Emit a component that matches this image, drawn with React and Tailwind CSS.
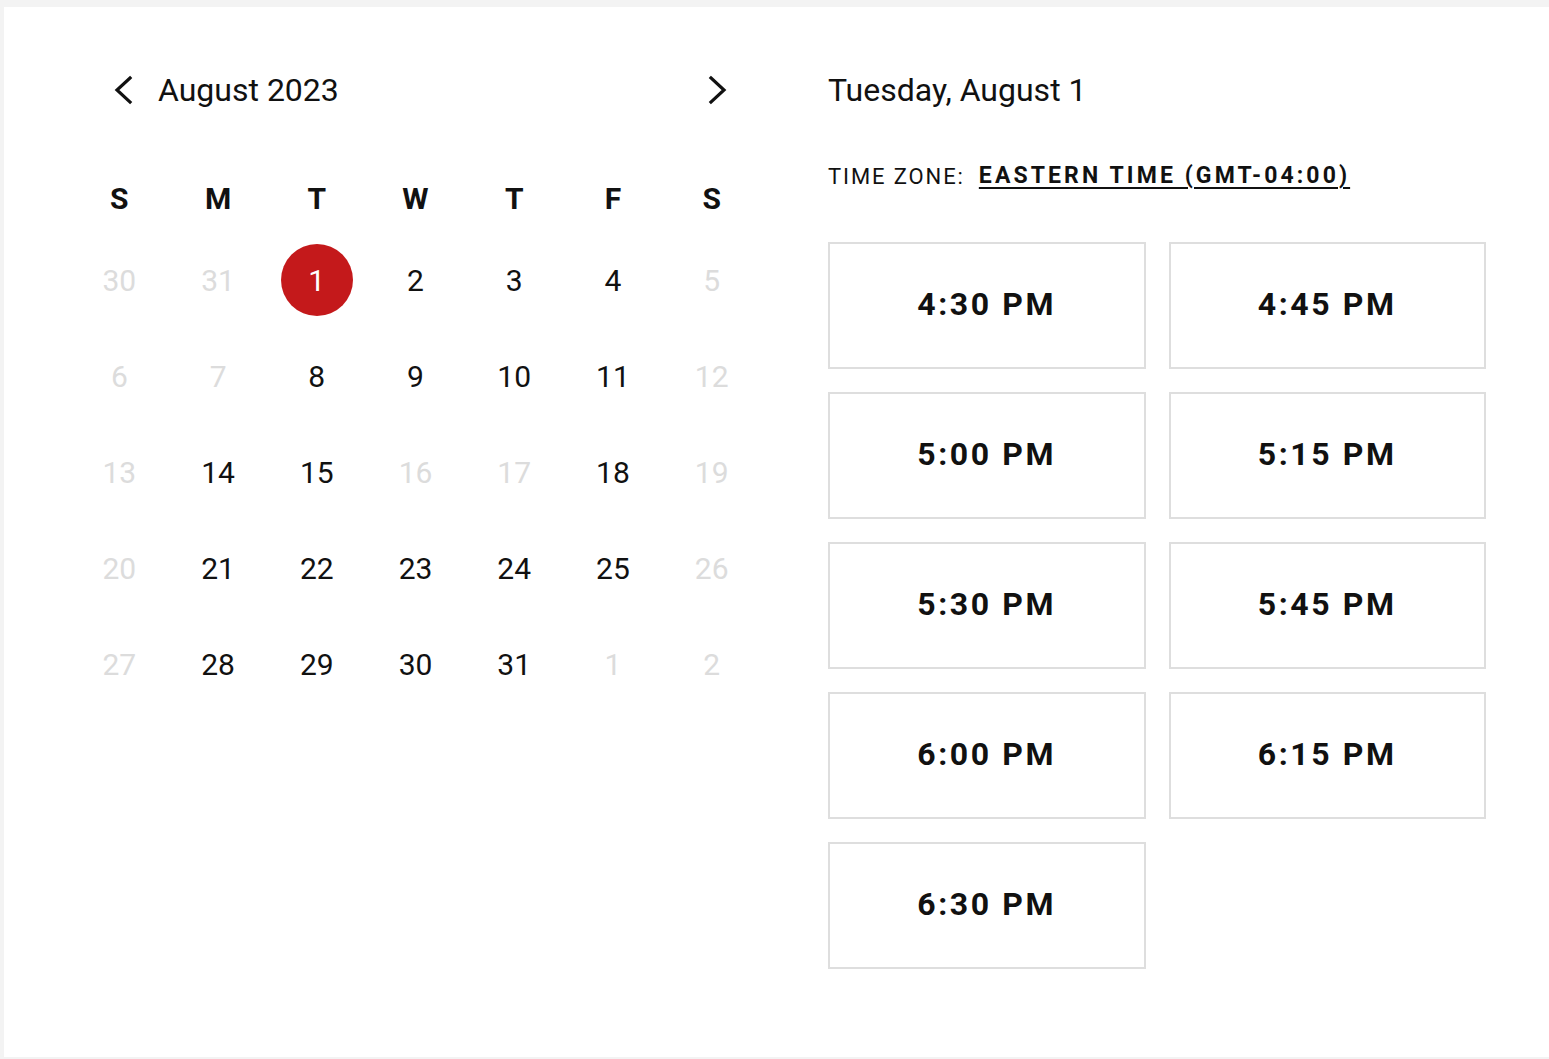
import React from "react";

const days = ["S", "M", "T", "W", "T", "F", "S"];

// [label, muted]
const weeks = [
  [["30", 1], ["31", 1], ["1", 0], ["2", 0], ["3", 0], ["4", 0], ["5", 1]],
  [["6", 1], ["7", 1], ["8", 0], ["9", 0], ["10", 0], ["11", 0], ["12", 1]],
  [["13", 1], ["14", 0], ["15", 0], ["16", 1], ["17", 1], ["18", 0], ["19", 1]],
  [["20", 1], ["21", 0], ["22", 0], ["23", 0], ["24", 0], ["25", 0], ["26", 1]],
  [["27", 1], ["28", 0], ["29", 0], ["30", 0], ["31", 0], ["1", 1], ["2", 1]],
];

const slots = ["4:30 PM", "4:45 PM", "5:00 PM", "5:15 PM", "5:30 PM", "5:45 PM", "6:00 PM", "6:15 PM", "6:30 PM"];

function Chevron({ dir }) {
  return (
    <svg width="24" height="30" viewBox="0 0 24 30" fill="none" stroke="#111" strokeWidth="3.2" strokeLinecap="square">
      {dir === "left" ? <polyline points="19,3 6,15 19,27" /> : <polyline points="6,3 19,15 6,27" />}
    </svg>
  );
}

function Calendar() {
  return (
    <div className="w-[691px] shrink-0">
      <div className="flex items-center h-[48px]">
        <button className="ml-[41px] flex items-center">
          <Chevron dir="left" />
        </button>
        <span className="ml-[23px] text-[32px] text-[#111]">August 2023</span>
        <button className="ml-auto mr-[32px] flex items-center">
          <Chevron dir="right" />
        </button>
      </div>
      <div className="grid grid-cols-7 mt-[50px] h-[68px] items-center">
        {days.map((d, i) => (
          <div key={i} className="text-center text-[30px] font-bold text-[#111]">{d}</div>
        ))}
      </div>
      {weeks.map((w, wi) => (
        <div key={wi} className="grid grid-cols-7 h-[96px] items-center">
          {w.map(([n, muted], i) => (
            <div key={i} className="flex justify-center items-center">
              {wi === 0 && n === "1" && !muted ? (
                <span className="w-[72px] h-[72px] rounded-full bg-[#c4191b] text-white text-[30px] flex items-center justify-center">1</span>
              ) : (
                <span className={"text-[30px] " + (muted ? "text-[#dcdcdc]" : "text-[#111]")}>{n}</span>
              )}
            </div>
          ))}
        </div>
      ))}
    </div>
  );
}

function Slots() {
  return (
    <div className="w-[658px]">
      <div className="h-[48px] flex items-center text-[32px] text-[#111]">Tuesday, August 1</div>
      <div className="mt-[42px] h-[40px] flex items-center text-[22px] text-[#111]">
        <span className="tracking-[1.9px]">TIME ZONE:</span>
        <a className="ml-[14px] text-[23px] font-bold underline underline-offset-[4px] decoration-2 tracking-[3.1px]">EASTERN TIME (GMT-04:00)</a>
      </div>
      <div className="mt-[46px] grid grid-cols-2 gap-x-[23px] gap-y-[23px]">
        {slots.map((s) => (
          <button key={s} className="h-[127px] pb-[4px] border-2 border-[#dedede] bg-white text-[32px] font-bold tracking-[2.6px] text-[#111]">
            {s}
          </button>
        ))}
      </div>
    </div>
  );
}

export default function App() {
  return (
    <div className="min-h-screen bg-[#f3f3f3] pl-[4px] pt-[7px] pb-[2px] font-['Roboto',sans-serif]">
      <div className="bg-white h-[1050px] flex pl-[66px] pt-[59px] gap-[67px]">
        <Calendar />
        <Slots />
      </div>
    </div>
  );
}
